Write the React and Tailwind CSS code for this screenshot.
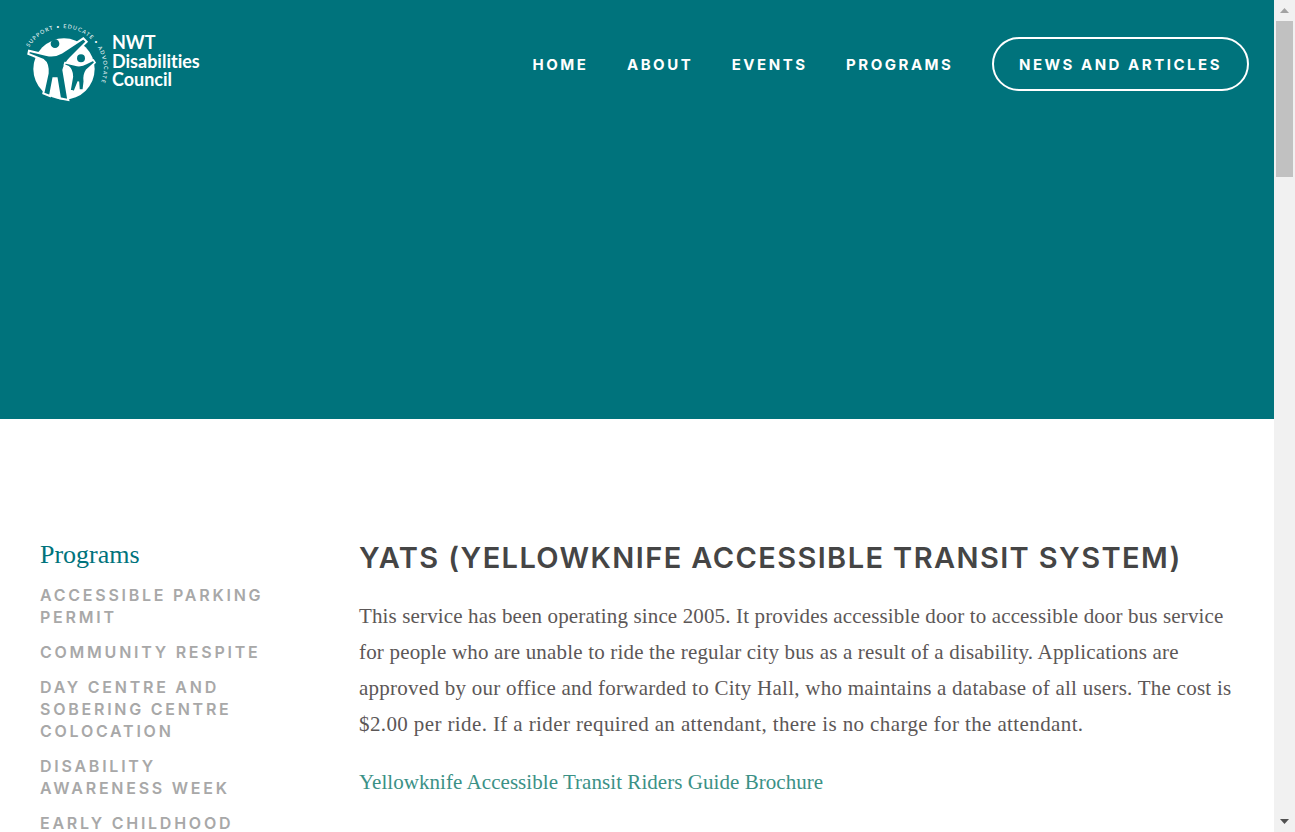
const sans = "font-['Inter','Liberation_Sans',sans-serif]";
const logoSans = "font-['Lato','Liberation_Sans',sans-serif]";
const serif = "font-['Liberation_Serif',serif]";

const navLinks = ['HOME', 'ABOUT', 'EVENTS', 'PROGRAMS'];

const programs = [
  ['ACCESSIBLE PARKING', 'PERMIT'],
  ['COMMUNITY RESPITE'],
  ['DAY CENTRE AND', 'SOBERING CENTRE', 'COLOCATION'],
  ['DISABILITY', 'AWARENESS WEEK'],
  ['EARLY CHILDHOOD'],
];

const paragraph = [
  { text: 'This service has been operating since 2005. It provides accessible door to accessible door bus service', track: 'tracking-[0.14px]' },
  { text: 'for people who are unable to ride the regular city bus as a result of a disability. Applications are', track: 'tracking-[0.18px]' },
  { text: 'approved by our office and forwarded to City Hall, who maintains a database of all users. The cost is', track: 'tracking-[0.25px]' },
  { text: '$2.00 per ride. If a rider required an attendant, there is no charge for the attendant.', track: 'tracking-[0.39px]' },
];

function LogoMark() {
  return (
    <svg width="78" height="80" viewBox="36 36 234 240" className="shrink-0 overflow-visible">
      <defs>
        <path id="ring" d="M42 112 A118 118 0 0 1 248 238" />
      </defs>
      <circle cx="147" cy="177" r="92" fill="#fff" />
      <text fontSize="16" fill="#fff" fontFamily="Lato, sans-serif" letterSpacing="3.4">
        <textPath href="#ring">SUPPORT • EDUCATE • ADVOCATE</textPath>
      </text>
      {/* big figure */}
      <path
        d="M42 122 L95 135 Q120 140 140 128 L205 85 L215 95 L165 145 Q150 160 145 180 L160 270 L135 265 L125 205 L115 205 L105 258 L85 250 L98 190 Q100 160 85 150 L40 132 Z"
        fill="#00737c"
        stroke="#fff"
        strokeWidth="6"
      />
      <circle cx="120" cy="101" r="13" fill="#00737c" />
      {/* small figure */}
      <path
        d="M150 158 L180 165 Q198 170 215 160 L235 150 L240 158 L215 180 Q205 195 208 215 L205 240 L192 240 L190 215 L178 245 L165 240 L172 200 Q172 180 160 170 L148 165 Z"
        fill="#00737c"
        stroke="#fff"
        strokeWidth="5"
      />
      <circle cx="198" cy="145" r="12" fill="#00737c" />
    </svg>
  );
}

function Header() {
  return (
    <header className="h-[419px] bg-[#00737c] flex items-start justify-between pl-[27px] pr-[25px]">
      <div className="flex items-center pt-[22px]">
        <LogoMark />
        <div className={`${logoSans} ml-[7px] mb-[2px] text-white text-[18px] font-bold leading-[18.5px] [font-variant-ligatures:none]`}>
          <div>NWT</div>
          <div>Disabilities</div>
          <div>Council</div>
        </div>
      </div>
      <nav className={`${sans} flex items-center gap-[38.5px] pt-[37px] text-white text-[15px] font-bold tracking-[2.52px]`}>
        {navLinks.map((link) => (
          <a key={link} className="block pt-[2px]">{link}</a>
        ))}
        <a className="flex items-center h-[54px] pt-[2px] px-[25px] border-2 border-white rounded-[27px]">NEWS AND ARTICLES</a>
      </nav>
    </header>
  );
}

function Sidebar() {
  return (
    <aside className="w-[359px] shrink-0 pl-[40px] pr-[50px]">
      <h2 className={`${serif} text-[#00737c] text-[26px] leading-[32px]`}>Programs</h2>
      <ul className={`${sans} mt-[13px] flex flex-col gap-[13px] text-[#a8a8a8] text-[16px] font-semibold leading-[22px] tracking-[2.75px]`}>
        {programs.map((lines) => (
          <li key={lines[0]}>
            {lines.map((line) => (
              <div key={line}>{line}</div>
            ))}
          </li>
        ))}
      </ul>
    </aside>
  );
}

function Article() {
  return (
    <article className="flex-1 min-w-0 pt-px">
      <h1 className={`${sans} text-[#454545] text-[29px] font-semibold leading-[36px] tracking-[1.4px] whitespace-nowrap`}>
        YATS (YELLOWKNIFE ACCESSIBLE TRANSIT SYSTEM)
      </h1>
      <div className={`${serif} mt-[22px] text-[#5c5757] text-[21px] leading-[36px] whitespace-nowrap`}>
        {paragraph.map((line) => (
          <p key={line.text} className={line.track}>{line.text}</p>
        ))}
      </div>
      <a className={`${serif} block mt-[22px] text-[#3b9186] text-[21px] leading-[36px] tracking-[0.05px]`}>
        Yellowknife Accessible Transit Riders Guide Brochure
      </a>
    </article>
  );
}

function Scrollbar() {
  return (
    <div className="w-[21px] shrink-0 bg-[#f1f1f1] flex flex-col items-center">
      <div className="h-[21px] w-full flex items-center justify-center">
        <svg width="9" height="5" viewBox="0 0 9 5"><path d="M4.5 0 L9 5 L0 5 Z" fill="#a3a3a3" /></svg>
      </div>
      <div className="w-[17px] h-[156px] bg-[#c1c1c1]" />
      <div className="flex-1" />
      <div className="h-[21px] w-full flex items-center justify-center">
        <svg width="9" height="5" viewBox="0 0 9 5"><path d="M0 0 L9 0 L4.5 5 Z" fill="#505050" /></svg>
      </div>
    </div>
  );
}

export default function App() {
  return (
    <div className="h-[832px] w-full flex overflow-hidden bg-white">
      <main className="flex-1 min-w-0 overflow-hidden">
        <Header />
        <div className="flex pt-[120px]">
          <Sidebar />
          <Article />
        </div>
      </main>
      <Scrollbar />
    </div>
  );
}
